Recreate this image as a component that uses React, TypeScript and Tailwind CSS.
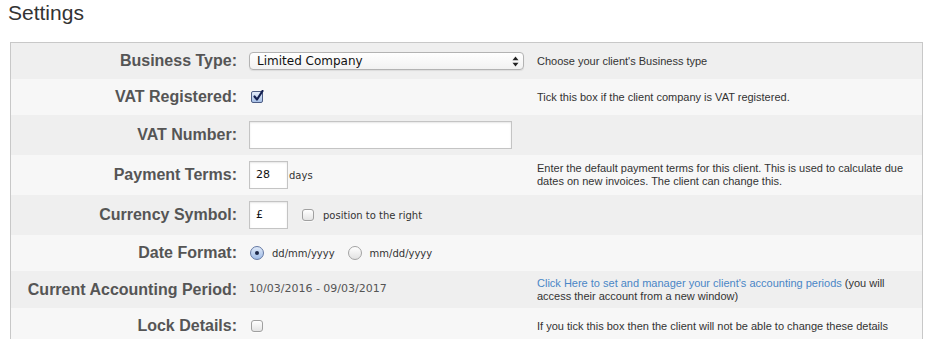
import React from "react";

const LABEL = "font-['Liberation_Sans',Arial,sans-serif] font-bold text-[16px] text-[#555] text-right";
const HELP = "font-['Liberation_Sans',Arial,sans-serif] text-[11px] leading-[13px] text-[#333]";
const VERD = "font-['DejaVu_Sans',Verdana,sans-serif] text-[10px] text-[#333]";

function Row({
  label,
  h,
  dark,
  children,
  help,
}: {
  label: string;
  h: string;
  dark: boolean;
  children?: React.ReactNode;
  help?: React.ReactNode;
}) {
  return (
    <div className={`flex items-center ${h} ${dark ? "bg-[#efefef]" : "bg-[#f7f7f7]"}`}>
      <div className={`w-[226px] shrink-0 ${LABEL}`}>{label}</div>
      <div className="w-[300px] shrink-0 pl-[12px] flex items-center">{children}</div>
      <div className={`w-[372px] shrink-0 ${HELP}`}>{help}</div>
    </div>
  );
}

function Checkbox({ checked, className = "" }: { checked?: boolean; className?: string }) {
  if (checked) {
    return (
      <div
        className={`relative w-[12px] h-[12px] rounded-[2px] border border-[#4d5d85] bg-linear-to-b from-[#e4ecf9] to-[#a7c0e6] ${className}`}
      >
        <svg className="absolute left-[1px] -top-[2px]" width="11" height="12" viewBox="0 0 11 12">
          <path d="M1.5 6.5 L4 9.5 L9.5 1" fill="none" stroke="#142050" strokeWidth="2.2" strokeLinecap="round" strokeLinejoin="round" />
        </svg>
      </div>
    );
  }
  return (
    <div
      className={`w-[12px] h-[12px] rounded-[3px] border border-[#a0a0a0] bg-linear-to-b from-white to-[#e4e4e4] shadow-[0_1px_0_rgba(255,255,255,0.6)] ${className}`}
    />
  );
}

function Radio({ checked }: { checked?: boolean }) {
  if (checked) {
    return (
      <div className="w-[14px] h-[14px] rounded-full border border-[#6478a3] bg-linear-to-b from-[#dfe9f8] to-[#9fbbe6] flex items-center justify-center">
        <div className="w-[4px] h-[4px] rounded-full bg-[#1c2747]" />
      </div>
    );
  }
  return <div className="w-[14px] h-[14px] rounded-full border border-[#a3a3a3] bg-linear-to-b from-white to-[#e2e2e2]" />;
}

export default function App() {
  return (
    <div className="w-[940px] h-[339px] overflow-hidden bg-white">
      <div className="h-[42px] pl-[8px] pt-[1px] font-['Liberation_Sans',Arial,sans-serif] text-[21px] leading-[24px] text-[#333]">
        Settings
      </div>
      <div className="ml-[10px] w-[913px] border border-[#c8c8c8]">
        <Row
          label="Business Type:"
          h="h-[36px]"
          dark
          help="Choose your client's Business type"
        >
          <div className="relative h-[18px] w-[275px] rounded-[4px] border border-[#b3b3b3] bg-linear-to-b from-white to-[#f2f2f2] shadow-[0_1px_1px_rgba(0,0,0,0.08)] flex items-center pl-[7px] font-['DejaVu_Sans',Verdana,sans-serif] text-[12px] text-[#111]">
            Limited Company
            <svg className="absolute right-[4px] top-[3px]" width="7" height="11" viewBox="0 0 7 11">
              <path d="M3.5 0.5 L6.5 4.3 L0.5 4.3 Z" fill="#222" />
              <path d="M3.5 10.5 L6.5 6.7 L0.5 6.7 Z" fill="#222" />
            </svg>
          </div>
        </Row>
        <Row
          label="VAT Registered:"
          h="h-[36px]"
          dark={false}
          help="Tick this box if the client company is VAT registered."
        >
          <Checkbox checked className="ml-[2px]" />
        </Row>
        <Row label="VAT Number:" h="h-[40px]" dark>
          <div className="h-[28px] w-[263px] border border-[#c4c4c4] bg-white shadow-[inset_0_1px_2px_rgba(0,0,0,0.1)]" />
        </Row>
        <Row
          label="Payment Terms:"
          h="h-[40px]"
          dark={false}
          help="Enter the default payment terms for this client. This is used to calculate due dates on new invoices. The client can change this."
        >
          <div className="h-[28px] w-[39px] border border-[#c4c4c4] bg-white shadow-[inset_0_1px_2px_rgba(0,0,0,0.1)] flex items-center pl-[6px] font-['DejaVu_Sans',Verdana,sans-serif] text-[11px] text-[#111]">
            28
          </div>
          <span className={`ml-[1px] ${VERD}`}>days</span>
        </Row>
        <Row label="Currency Symbol:" h="h-[40px]" dark>
          <div className="h-[28px] w-[39px] border border-[#c4c4c4] bg-white shadow-[inset_0_1px_2px_rgba(0,0,0,0.1)] flex items-center pl-[6px] font-['DejaVu_Sans',Verdana,sans-serif] text-[11px] text-[#111]">
            £
          </div>
          <Checkbox className="ml-[14px]" />
          <span className={`ml-[9px] ${VERD}`}>position to the right</span>
        </Row>
        <Row label="Date Format:" h="h-[36px]" dark={false}>
          <div className="ml-[1px] flex items-center">
            <Radio checked />
            <span className={`ml-[8px] ${VERD}`}>dd/mm/yyyy</span>
            <div className="ml-[13px]">
              <Radio />
            </div>
            <span className={`ml-[8px] ${VERD}`}>mm/dd/yyyy</span>
          </div>
        </Row>
        <Row
          label="Current Accounting Period:"
          h="h-[37px]"
          dark
          help={
            <>
              <span className="text-[#4a86c6]">Click Here to set and manager your client's accounting periods</span> (you
              will access their account from a new window)
            </>
          }
        >
          <span className="font-['DejaVu_Sans',Verdana,sans-serif] text-[11px] text-[#555]">10/03/2016 - 09/03/2017</span>
        </Row>
        <Row
          label="Lock Details:"
          h="h-[36px]"
          dark={false}
          help="If you tick this box then the client will not be able to change these details"
        >
          <Checkbox className="ml-[2px]" />
        </Row>
      </div>
    </div>
  );
}
